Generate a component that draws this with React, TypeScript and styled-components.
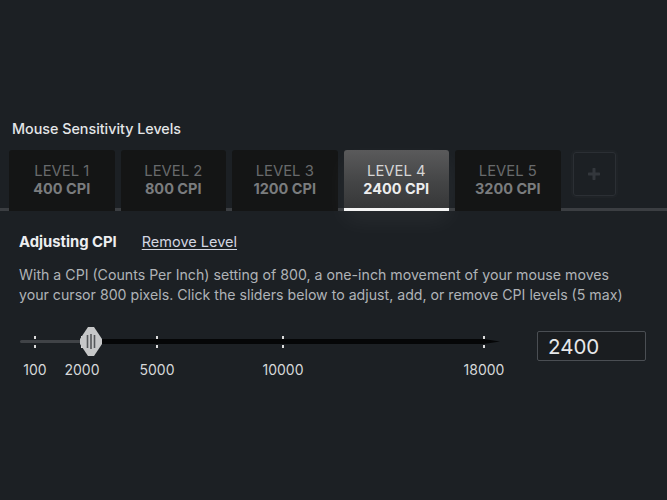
import styled, { createGlobalStyle } from "styled-components";

const Global = createGlobalStyle`
	html, body { margin: 0; background: #1c2024; }
	body { font-family: Inter, "Noto Sans", sans-serif; }
`;

const Page = styled.div`
	width: 667px;
	height: 500px;
	background: #1c2024;
	padding-top: 120px;
	box-sizing: border-box;
	overflow: hidden;
`;
const Title = styled.div`
	padding-left: 12px;
	font-size: 14.3px;
	line-height: 18px;
	font-weight: 500;
	color: #e4e6e8;
`;
const TabBar = styled.div`
	margin-top: 12px;
	display: flex;
	align-items: flex-start;
	gap: 6px;
	padding-left: 9px;
	border-bottom: 3px solid #3b3e42;
`;
const Tab = styled.div<{ $active?: boolean }>`
	width: 105.5px;
	height: 61px;
	box-sizing: border-box;
	margin-bottom: -3px;
	border-bottom: 3px solid ${(p) => (p.$active ? "#f4f4f4" : "transparent")};
	border-radius: 3px 3px 0 0;
	background: ${(p) =>
		p.$active ? "linear-gradient(180deg, #5a5a5b 0%, #444546 55%, #363738 100%)" : "#141515"};
	box-shadow: ${(p) => (p.$active ? "0 10px 24px rgba(255,255,255,0.05)" : "none")};
	display: flex;
	flex-direction: column;
	justify-content: center;
	align-items: center;
	padding-top: 1px;
`;
const TabLevel = styled.span<{ $active?: boolean }>`
	font-size: 14.8px;
	line-height: 18px;
	font-weight: 400;
	color: ${(p) => (p.$active ? "#d6d6d6" : "#686a6c")};
`;
const TabCpi = styled.span<{ $active?: boolean }>`
	font-size: 14.5px;
	line-height: 18px;
	font-weight: 700;
	color: ${(p) => (p.$active ? "#ededed" : "#7a7c7e")};
`;
const AddBtn = styled.div`
	margin-left: 6px;
	margin-top: 2px;
	width: 43px;
	height: 44px;
	box-sizing: border-box;
	border: 1px solid #2b2f34;
	border-radius: 3px;
	box-shadow: 0 0 0 2px #1f2327;
	display: flex;
	align-items: center;
	justify-content: center;
	color: #33373c;
`;
const Panel = styled.div`
	padding: 22px 19px 0;
`;
const HeadRow = styled.div`
	display: flex;
	align-items: center;
	gap: 25px;
	line-height: 18px;
`;
const Heading = styled.span`
	font-size: 14.8px;
	font-weight: 700;
	color: #eceef0;
`;
const RemoveLink = styled.a`
	font-size: 14.5px;
	color: #d3d6e2;
	text-decoration: underline;
	text-underline-offset: 2px;
	cursor: pointer;
`;
const Desc = styled.p`
	margin: 14px 0 0;
	font-size: 14.17px;
	line-height: 20px;
	color: #afb3b7;
	white-space: nowrap;
`;
const SliderRow = styled.div`
	margin-top: 22px;
	display: flex;
	align-items: flex-start;
`;
const Slider = styled.div`
	position: relative;
	width: 481px;
	height: 60px;
`;
const TrackLeft = styled.div`
	position: absolute;
	left: 1px;
	top: 13px;
	height: 3px;
	border-radius: 2px;
	background: #404347;
`;
const TrackRight = styled.div`
	position: absolute;
	top: 12px;
	right: 0;
	height: 5px;
	background: #050607;
	clip-path: polygon(0 0, 96% 0, 100% 50%, 96% 100%, 0 100%);
`;
const Tick = styled.div`
	position: absolute;
	top: 9px;
	width: 2px;
	height: 12px;
	transform: translateX(-50%);
	background: linear-gradient(180deg, #dcdcdc 0 3px, transparent 3px 9px, #dcdcdc 9px 12px);
`;
const Label = styled.span`
	position: absolute;
	top: 35px;
	transform: translateX(-50%);
	font-size: 14px;
	line-height: 16px;
	color: #d6d8da;
`;
const Thumb = styled.svg`
	position: absolute;
	top: 0;
	transform: translateX(-50%);
`;
const CpiInput = styled.input`
	margin-left: 37px;
	margin-top: 4px;
	width: 109px;
	height: 30px;
	box-sizing: border-box;
	background: #1a1d20;
	border: 1px solid #4a4e53;
	border-radius: 2px;
	padding: 0 10px;
	font-family: Inter, "Noto Sans", sans-serif;
	font-size: 20.5px;
	color: #e6e8ea;
	outline: none;
`;

const levels = [
	{ n: 1, cpi: 400 },
	{ n: 2, cpi: 800 },
	{ n: 3, cpi: 1200 },
	{ n: 4, cpi: 2400 },
	{ n: 5, cpi: 3200 },
];
const marks = [
	{ v: "100", x: 16 },
	{ v: "2000", x: 63 },
	{ v: "5000", x: 138 },
	{ v: "10000", x: 264 },
	{ v: "18000", x: 465 },
];
const thumbX = 72;

export default function App() {
	return (
		<Page>
			<Global />
			<Title>Mouse Sensitivity Levels</Title>
			<TabBar>
				{levels.map((l) => (
					<Tab key={l.n} $active={l.n === 4}>
						<TabLevel $active={l.n === 4}>LEVEL {l.n}</TabLevel>
						<TabCpi $active={l.n === 4}>{l.cpi} CPI</TabCpi>
					</Tab>
				))}
				<AddBtn>
					<svg width="12" height="12" viewBox="0 0 12 12">
						<path d="M6 1v10M1 6h10" stroke="currentColor" strokeWidth="3" strokeLinecap="round" />
					</svg>
				</AddBtn>
			</TabBar>
			<Panel>
				<HeadRow>
					<Heading>Adjusting CPI</Heading>
					<RemoveLink>Remove Level</RemoveLink>
				</HeadRow>
				<Desc>
					With a CPI (Counts Per Inch) setting of 800, a one-inch movement of your mouse moves
					<br />
					your cursor 800 pixels. Click the sliders below to adjust, add, or remove CPI levels (5 max)
				</Desc>
				<SliderRow>
					<Slider>
						<TrackLeft style={{ width: thumbX - 1 }} />
						<TrackRight style={{ left: thumbX }} />
						{marks.map((m) => (
							<Tick key={m.v} style={{ left: m.x }} />
						))}
						{marks.map((m) => (
							<Label key={m.v} style={{ left: m.x }}>
								{m.v}
							</Label>
						))}
						<Thumb width="22" height="29" viewBox="0 0 22 29" style={{ left: thumbX }}>
							<polygon points="8,0 14,0 22,12 22,17 14,29 8,29 0,17 0,12" fill="#c6c7c8" />
							<path d="M7.5 8v13M11 7v15M14.5 8v13" stroke="#55585b" strokeWidth="1.6" />
						</Thumb>
					</Slider>
					<CpiInput defaultValue="2400" />
				</SliderRow>
			</Panel>
		</Page>
	);
}
